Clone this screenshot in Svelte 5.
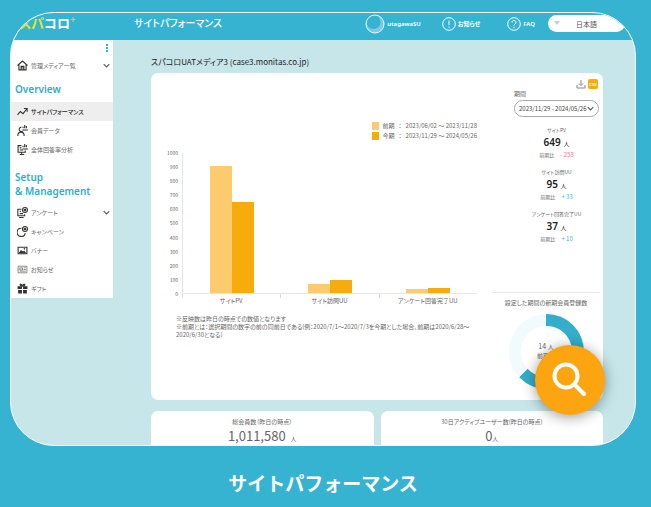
<script>
  let language = $state('ja');

  const overview = [
    { label: 'サイトパフォーマンス', icon: 'trend', active: true },
    { label: '会員データ', icon: 'member' },
    { label: '全体回答率分析', icon: 'analysis' }
  ];

  const management = [
    { label: 'アンケート', icon: 'survey', expandable: true },
    { label: 'キャンペーン', icon: 'campaign' },
    { label: 'バナー', icon: 'banner' },
    { label: 'お知らせ', icon: 'news' },
    { label: 'ギフト', icon: 'gift' }
  ];

  const axisMax = 1000;
  const ticks = [1000, 900, 800, 700, 600, 500, 400, 300, 200, 100, 0];

  const chart = [
    { label: 'サイトPV', previous: 907, current: 649 },
    { label: 'サイト訪問UU', previous: 62, current: 95 },
    { label: 'アンケート回答完了UU', previous: 27, current: 37 }
  ];

  const periods = [
    { name: '前期', range: '2023/06/02 ～ 2023/11/28', kind: 'previous' },
    { name: '今期', range: '2023/11/29 ～ 2024/05/26', kind: 'current' }
  ];

  const stats = [
    { label: 'サイトPV', value: 649, diff: -258 },
    { label: 'サイト訪問UU', value: 95, diff: 33 },
    { label: 'アンケート回答完了UU', value: 37, diff: 10 }
  ];

  const totals = [
    { label: '総会員数（昨日の時点）', value: '1,011,580', spaced: true },
    { label: '30日アクティブユーザー数(昨日の時点)', value: '0' }
  ];

  function formatDiff(diff) {
    return diff < 0 ? `- ${-diff}` : `+ ${diff}`;
  }

  function barHeight(value) {
    return `${(value / axisMax) * 100}%`;
  }
</script>

{#snippet icon(name)}
  <svg class="icon" viewBox="0 0 20 20" aria-hidden="true">
    {#if name === 'home'}
      <path d="M1 10 10 2l9 8M3.500 8.500V18h13V8.500" />
      <path d="M7.500 18v-6.500h5V18M7.500 14.500h5" />
    {:else if name === 'trend'}
      <path d="M1 16l5-6 5 4 7-9M12.500 4.500H18.500V10.500" />
    {:else if name === 'member'}
      <path d="M8 4a4 4 0 1 0 3 6.500M1.500 20c0-5 2-7 5.500-7s6 2 6 7" />
      <path d="M11 6V3M14 6V0M17 6V2M10 9h10" />
    {:else if name === 'analysis'}
      <path d="M8 3H2v12h13v-3M5 19h8M8.500 15v4M5 7h3M5 11h6" />
      <path d="M11 6V3M14 6V0M17 6V2M10 9h10" />
    {:else if name === 'survey'}
      <path d="M8 4H1.500v12H14v-3M4 19h8M5 8h2M5 12h6" />
      <circle cx="14.500" cy="5.500" r="4.500" />
      <circle cx="14.500" cy="5.500" r="1.500" />
    {:else if name === 'campaign'}
      <path d="M8 4a7.500 7.500 0 1 0 7 9" />
      <circle cx="14.500" cy="5.500" r="4.500" />
      <circle cx="14.500" cy="5.500" r="1.500" />
    {:else if name === 'banner'}
      <path d="M2 4h16v12H2z" />
      <path class="fill" d="M3 15l4-6 4 3 2-2 4 5z" />
      <circle class="fill" cx="13.500" cy="7" r="1.500" />
    {:else if name === 'news'}
      <path class="thin" d="M2 4h16v12H2zM5 7h5v4H5zM12 7h4M12 10h4M5 13h11" />
    {:else if name === 'gift'}
      <path class="fill" d="M1 6h8v5H1zM11 6h8v5h-8zM2 12.500h7V19H2zM11 12.500h7V19h-7z" />
      <path d="M10 6C5 6 5 2 7 2s3 4 3 4 1-4 3-4 2 4-3 4" />
    {/if}
  </svg>
{/snippet}

{#snippet chevron()}
  <svg class="chevron" viewBox="0 0 10 10" aria-hidden="true">
    <path d="M1 3l4 4 4-4" />
  </svg>
{/snippet}

{#snippet menu(items)}
  <ul class="menu">
    {#each items as item}
      <li>
        <a href="#top" class:active={item.active}>
          {@render icon(item.icon)}
          <span>{item.label}</span>
          {#if item.expandable}
            {@render chevron()}
          {/if}
        </a>
      </li>
    {/each}
  </ul>
{/snippet}

<figure class="showcase">
  <div class="stage">
    <div class="frame">
      <header class="topbar">
        <a class="logo" href="#top"><span>スパ</span>コロ<sup>+</sup></a>
        <h1>サイトパフォーマンス</h1>
        <nav class="account">
          <a href="#user">
            <svg class="avatar" viewBox="0 0 20 20" aria-hidden="true">
              <circle cx="10" cy="10" r="9" fill="#7cc9e6" />
              <circle cx="8.500" cy="8" r="7" fill="#37b3d2" />
              <circle cx="10" cy="10" r="9" fill="none" stroke="#e6f6fa" />
            </svg>
            utagawaSU
          </a>
          <a href="#news">
            <svg class="badge" viewBox="0 0 14 14" aria-hidden="true">
              <circle cx="7" cy="7" r="6.300" />
              <path d="M7 3.500v4.500M7 9.500v1.200" />
            </svg>
            お知らせ
          </a>
          <a class="faq" href="#faq">
            <svg class="badge" viewBox="0 0 14 14" aria-hidden="true">
              <circle cx="7" cy="7" r="6.300" />
              <path d="M5 5.500c0-2.700 4-2.700 4 0 0 1.400-2 1.400-2 3M7 9.800v1.200" />
            </svg>
            FAQ
          </a>
        </nav>
        <div class="language">
          <select bind:value={language} aria-label="言語">
            <option value="ja">日本語</option>
            <option value="en">English</option>
          </select>
        </div>
      </header>

      <div class="body">
        <aside class="sidebar">
          <button class="more" aria-label="メニュー">
            <i></i><i></i><i></i>
          </button>
          <a class="media" href="#media">
            {@render icon('home')}
            <span>管理メディア一覧</span>
            {@render chevron()}
          </a>
          <h2>Overview</h2>
          {@render menu(overview)}
          <h2 class="second">Setup<br />&amp; Management</h2>
          {@render menu(management)}
        </aside>

        <main>
          <h3>スパコロUATメディア3 (case3.monitas.co.jp)</h3>

          <section class="card report">
            <div class="chart">
              <div class="legend">
                {#each periods as period}
                  <div class="legend-row">
                    <i class={period.kind}></i>
                    <span>{period.name}</span>
                    <span>：</span>
                    <span>{period.range}</span>
                  </div>
                {/each}
              </div>

              <div class="plot">
                <div class="y-axis">
                  {#each ticks as tick}
                    <span>{tick}</span>
                  {/each}
                </div>
                <div class="groups">
                  {#each chart as group}
                    <div class="group">
                      <div class="bar previous" style:height={barHeight(group.previous)}></div>
                      <div class="bar current" style:height={barHeight(group.current)}></div>
                    </div>
                  {/each}
                </div>
              </div>

              <div class="x-axis">
                {#each chart as group}
                  <span>{group.label}</span>
                {/each}
              </div>

              <div class="notes">
                <p>※反映数は昨日の時点での数値となります</p>
                <p>※前期とは：選択期間の数字の前の同前日である(例：2020/7/1～2020/7/3を今期とした場合、前期は2020/6/28～2020/6/30となる)</p>
              </div>
            </div>

            <div class="summary">
              <div class="filters">
                <div class="tools">
                  <button class="download" aria-label="ダウンロード">
                    <svg viewBox="0 0 10 10" aria-hidden="true">
                      <path d="M1 6v3h8V6M5 1v5M3 4.500l2 2 2-2" />
                    </svg>
                  </button>
                  <button class="csv">CSV</button>
                </div>
                <label for="range">期間</label>
                <button class="range" id="range">
                  2023/11/29 - 2024/05/26
                  {@render chevron()}
                </button>
                <dl class="stats">
                  {#each stats as stat}
                    <div>
                      <dt>{stat.label}</dt>
                      <dd class="value">{stat.value} <small>人</small></dd>
                      <dd class="diff">
                        前期比
                        <span class:minus={stat.diff < 0}>{formatDiff(stat.diff)}</span>
                      </dd>
                    </div>
                  {/each}
                </dl>
              </div>

              <div class="members">
                <h4>設定した期間の新期会員登録数</h4>
                <div class="donut">
                  <p>14 <small>人</small></p>
                  <p class="sub">前期比</p>
                </div>
              </div>
            </div>
          </section>

          <div class="totals">
            {#each totals as total}
              <section class="card total">
                <h4>{total.label}</h4>
                <p class:spaced={total.spaced}>{total.value}<small>人</small></p>
              </section>
            {/each}
          </div>
        </main>
      </div>
    </div>

    <button class="magnify" aria-label="拡大">
      <svg viewBox="0 0 36 36" aria-hidden="true">
        <circle cx="14" cy="14" r="11.500" />
        <path d="M22.500 22.500 32 32" />
      </svg>
    </button>
  </div>
  <figcaption>サイトパフォーマンス</figcaption>
</figure>

<style>
  :global(body) {
    background: #37b3d2;
  }

  .showcase {
    margin: 0;
    padding: 12px 15px 10px 10px;
    font-family: "Noto Sans CJK JP", sans-serif;
    font-feature-settings: "palt";
    font-size: 6px;
    line-height: 8px;
    color: #666;
  }

  .showcase * {
    box-sizing: border-box;
  }

  h1, h2, h3, h4, p, ul, dl, dd {
    margin: 0;
    padding: 0;
  }

  a {
    color: inherit;
    text-decoration: none;
  }

  button, select {
    margin: 0;
    padding: 0;
    border: none;
    background: none;
    color: inherit;
    font: inherit;
    font-feature-settings: inherit;
    cursor: pointer;
  }

  .stage {
    position: relative;
  }

  .frame {
    aspect-ratio: 626 / 434;
    overflow: hidden;
    border: 1px solid #fff;
    border-radius: 44px;
    background: #c6e6ea;
  }

  /* Top bar */
  .topbar {
    display: flex;
    align-items: flex-start;
    height: 27px;
    padding: 2px 10px 0 8px;
    background: #37b3d2;
    color: #fff;
  }

  .logo {
    width: 115px;
    font-size: 13px;
    line-height: 16px;
    font-weight: 700;
  }

  .logo span {
    color: #e6e617;
  }

  .logo sup {
    font-size: 9px;
    line-height: 0;
    color: #f5b62e;
  }

  .topbar h1 {
    font-size: 10px;
    line-height: 16px;
    font-weight: 500;
  }

  .account {
    display: flex;
    gap: 21px;
    margin-left: auto;
    font-family: "Noto Sans", "Noto Sans CJK JP", sans-serif;
    font-size: 6px;
    font-weight: 600;
  }

  .account a {
    display: flex;
    align-items: center;
    gap: 2px;
    height: 17px;
  }

  .account .faq {
    margin-left: 6px;
  }

  .avatar {
    width: 20px;
    height: 20px;
  }

  .badge {
    width: 14px;
    height: 14px;
    fill: none;
    stroke: #fff;
    stroke-width: 1;
  }

  .language {
    position: relative;
    margin-left: 13px;
  }

  .language::before {
    content: "";
    position: absolute;
    z-index: 1;
    top: 6px;
    left: 6px;
    border: 3px solid transparent;
    border-top: 4px solid #ccc;
    border-bottom: none;
  }

  .language select {
    display: block;
    appearance: none;
    width: 77px;
    height: 17px;
    border-radius: 9px;
    background: #fff;
    color: #555;
    font-size: 7px;
    text-align: center;
    text-align-last: center;
  }

  /* Sidebar */
  .body {
    display: flex;
    align-items: flex-start;
  }

  .sidebar {
    width: 102px;
    flex: none;
    background: #fff;
  }

  .more {
    display: flex;
    flex-direction: column;
    justify-content: center;
    gap: 1px;
    width: 10px;
    height: 16px;
    margin-left: auto;
    padding-left: 3px;
  }

  .more i {
    width: 2px;
    height: 2px;
    background: #37b3d2;
  }

  .media,
  .menu a {
    display: flex;
    align-items: center;
    gap: 3px;
    height: 19px;
    padding: 0 3px 0 6px;
  }

  .menu {
    list-style: none;
  }

  .menu a.active {
    background: #eee;
    color: #222;
    font-weight: 500;
  }

  .icon {
    width: 11px;
    height: 11px;
    flex: none;
    fill: none;
    stroke: #333;
    stroke-width: 2;
  }

  .icon .thin {
    stroke-width: 1;
  }

  .icon .fill {
    fill: #333;
    stroke: none;
  }

  .chevron {
    width: 7px;
    height: 7px;
    flex: none;
    margin-left: auto;
    fill: none;
    stroke: #555;
    stroke-width: 1.5;
  }

  .sidebar h2 {
    padding: 7px 4px 6px;
    font-family: "Noto Sans", sans-serif;
    font-size: 10px;
    line-height: 14px;
    font-weight: 600;
    color: #2fadc9;
  }

  .sidebar .second {
    padding-top: 11px;
    padding-bottom: 5px;
  }

  /* Content */
  main {
    flex: 1;
    min-width: 0;
    padding: 16px 32px 0 38px;
  }

  main h3 {
    margin-bottom: 5px;
    font-size: 8px;
    line-height: 12px;
    font-weight: 400;
    color: #222;
  }

  .card {
    border-radius: 7px;
    background: #fff;
  }

  .report {
    display: flex;
    padding-right: 3px;
  }

  .chart {
    flex: 1;
    min-width: 0;
    padding: 48px 15px 0 0;
  }

  .legend {
    display: flex;
    flex-direction: column;
    align-items: flex-end;
    margin-bottom: 12px;
  }

  .legend-row {
    display: flex;
    align-items: center;
    gap: 4px;
    line-height: 10px;
  }

  .legend-row i {
    width: 7px;
    height: 8px;
  }

  .previous {
    background: #fbcb6e;
  }

  .current {
    background: #f7ab0d;
  }

  .plot {
    display: flex;
    height: 141px;
  }

  .y-axis {
    display: flex;
    flex-direction: column;
    justify-content: space-between;
    width: 31px;
    margin: -4px 0;
    padding-right: 4px;
    font-size: 5px;
    text-align: right;
  }

  .groups {
    display: flex;
    flex: 1;
    border-left: 1px solid #e6e6e6;
    border-bottom: 1px solid #e6e6e6;
  }

  .group {
    display: flex;
    flex: 1;
    align-items: flex-end;
    justify-content: center;
  }

  .bar {
    width: 22%;
  }

  .x-axis {
    display: flex;
    margin-left: 31px;
  }

  .x-axis span {
    flex: 1;
    padding-top: 3px;
    background: linear-gradient(#ddd, #ddd) left top / 1px 4px no-repeat;
    text-align: center;
    white-space: nowrap;
  }

  .notes {
    margin-top: 10px;
    padding: 0 4px 0 25px;
  }

  /* Summary column */
  .summary {
    width: 108px;
    flex: none;
  }

  .filters {
    display: flex;
    flex-direction: column;
    padding: 6px 1px 49px 22px;
    border-bottom: 1px solid #e8e8e8;
  }

  .tools {
    display: flex;
    justify-content: flex-end;
    gap: 2px;
    padding-right: 1px;
  }

  .tools button {
    width: 10px;
    height: 10px;
  }

  .download svg {
    display: block;
    fill: none;
    stroke: #888;
    stroke-width: 1;
  }

  .tools .csv {
    border-radius: 2px;
    background: #f7ab0d;
    color: #fff;
    font-size: 4px;
    font-weight: 700;
  }

  .filters label {
    margin: 1px 0 2px;
  }

  .range {
    display: flex;
    align-items: center;
    height: 17px;
    padding: 0 4px;
    border: 1px solid #aaa;
    border-radius: 9px;
    color: #444;
    white-space: nowrap;
  }

  .stats {
    display: flex;
    flex-direction: column;
    gap: 9px;
    margin-top: 9px;
    font-size: 5px;
    text-align: center;
  }

  .value {
    font-family: "Noto Sans", "Noto Sans CJK JP", sans-serif;
    font-size: 10px;
    line-height: 17px;
    font-weight: 600;
    color: #222;
  }

  small {
    font-size: 6px;
    line-height: 0;
    font-weight: 400;
  }

  .diff span {
    margin-left: 5px;
    font-size: 6px;
    line-height: 0;
    color: #37b3d2;
  }

  .diff .minus {
    color: #f27b7b;
  }

  .members {
    padding: 6px 0 11px;
    text-align: center;
  }

  h4 {
    font-weight: 400;
  }

  .donut {
    display: flex;
    flex-direction: column;
    align-items: center;
    width: 75px;
    height: 75px;
    margin: 7px auto 0;
    padding-top: 27px;
    border-radius: 50%;
    background:
      radial-gradient(circle, #fff 25px, transparent 26px),
      conic-gradient(#34aecb 227deg, #f1fafc 0);
  }

  .donut p {
    font-size: 7px;
    line-height: 10px;
  }

  .donut .sub {
    font-size: 6px;
  }

  .totals {
    display: grid;
    grid-template-columns: 1fr 1fr;
    gap: 7px;
    margin-top: 11px;
  }

  .total {
    padding: 7px 0 20px;
    text-align: center;
  }

  .total p {
    font-size: 13px;
    line-height: 20px;
  }

  .spaced small {
    margin-left: 5px;
  }

  /* Magnifier floats over the frame corner */
  .magnify {
    position: absolute;
    right: 31px;
    bottom: 31px;
    display: grid;
    place-items: center;
    width: 70px;
    height: 70px;
    border-radius: 50%;
    background: #fca510;
    box-shadow: 0 2px 14px rgba(0, 0, 0, 0.4);
  }

  .magnify svg {
    width: 36px;
    height: 36px;
    fill: none;
    stroke: #fff;
    stroke-width: 4;
    stroke-linecap: round;
  }

  figcaption {
    margin-top: 23px;
    font-size: 19px;
    line-height: 28px;
    font-weight: 700;
    font-feature-settings: normal;
    color: #fff;
    text-align: center;
  }
</style>
